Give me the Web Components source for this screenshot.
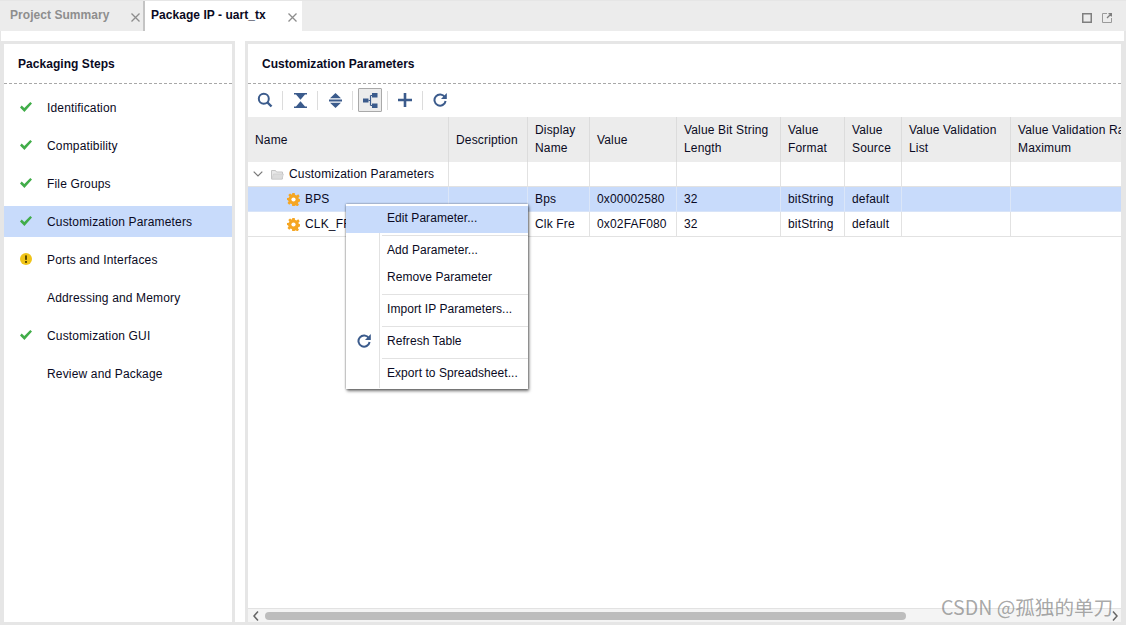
<!DOCTYPE html>
<html lang="en">
<head>
<meta charset="UTF-8">
<title>Package IP - uart_tx</title>
<style>
  html, body { margin: 0; height: 100%; overflow: hidden; background: #e6e6e6; }
  body { font: 12px "Liberation Sans", Arial, sans-serif; color: #0a0a23; letter-spacing: .2px; }
</style>
</head>
<body>
<ip-app></ip-app>

<script>
const ICONS = {
  check: '<svg width="12" height="10" viewBox="0 0 12 10"><path d="M0 5.400 1.700 3.600 4.300 6 10.300 0 12 1.500 4.400 10z" fill="#41ad49"/></svg>',
  warn: '<svg width="12" height="12" viewBox="0 0 12 12"><circle cx="6" cy="6" r="6" fill="#f0c419"/><rect x="5" y="2.200" width="2" height="4.800" rx=".8" fill="#5c4a00"/><rect x="5" y="8" width="2" height="1.900" fill="#5c4a00"/></svg>',
  gear: '<svg width="13" height="13" viewBox="0 0 13 13"><path d="M5.300 0h2.400l.3 1.800 1.300.6L11.300 1.300l1.400 2-1.300 1.400.3 1.100 1.300.4v2.400l-1.500.3-.6 1.300 1.100 1.500-1.700 1.700-1.500-1.100-1.300.6-.3 1.600H5.300L5 11.200l-1.300-.6-1.500 1.100-1.700-1.700L1.600 8.500 1 7.200 0 6.900V5l1.800-.3.600-1.300L1.300 1.900 3 .5l1.500.9L5 1.600z" fill="#f5a623"/><circle cx="6.500" cy="6.500" r="2.100" fill="#fff"/></svg>',
  folder: '<svg width="13" height="11" viewBox="0 0 13 11"><path d="M.5 1.500h4l1 1.500h6v7h-11z" fill="#e8e8e8" stroke="#c4c4c4"/><path d="M2.500 5h10l-1.500 5H.800z" fill="#dcdcdc" stroke="#cacaca" stroke-width=".6"/></svg>',
  chevron: '<svg width="10" height="6" viewBox="0 0 10 6"><path d="M.7.700 5 5 9.300.700" fill="none" stroke="#777" stroke-width="1.200"/></svg>',
  search: '<svg width="16" height="16" viewBox="0 0 16 16"><circle cx="6.800" cy="6.800" r="5" fill="none" stroke="#3b5b8c" stroke-width="2"/><path d="M10.500 10.500 14.500 14.500" stroke="#3b5b8c" stroke-width="2.400"/></svg>',
  collapse: '<svg width="13" height="15" viewBox="0 0 13 15"><path d="M0 0h13v1.500H11L6.500 6.800 2 1.500H0zM0 15h13v-1.500H11L6.500 8.200 2 13.500H0z" fill="#3b5b8c"/></svg>',
  expand: '<svg width="13" height="15" viewBox="0 0 13 15"><path d="M6.500 0 12 5.300H1zM6.500 15 1 9.700h11zM0 6.600h13v1.800H0z" fill="#3b5b8c"/></svg>',
  tree: '<svg width="15" height="15" viewBox="0 0 15 15"><path d="M0 5.500h5.500v4H0zM9 0h5.500v4.500H9zM9 10.500h5.500V15H9z" fill="#3b5b8c"/><path d="M5.500 7.500h2M7.500 2.500v10M7.500 2.500H9M7.500 12.500H9" fill="none" stroke="#3b5b8c" stroke-width="1.200"/></svg>',
  plus: '<svg width="14" height="14" viewBox="0 0 14 14"><path d="M5.700 0h2.600v5.700H14v2.600H8.300V14H5.700V8.300H0V5.700h5.700z" fill="#3b5b8c"/></svg>',
  refresh: '<svg width="14" height="14" viewBox="0 0 14 14"><path d="M11.800 4A5.600 5.600 0 1 0 12.600 8" fill="none" stroke="#3b5b8c" stroke-width="2"/><path d="M13.800 0v6H8z" fill="#3b5b8c"/></svg>'
};

class IpTabbar extends HTMLElement {
  constructor() {
    super();
    this.attachShadow({mode: 'open'}).innerHTML = `
      <style>
        :host { display: flex; height: 30px; margin-top: 1px; background: #ececec; padding-left: 3px; font-weight: bold; letter-spacing: .05px; }
        .tab { display: flex; align-items: center; box-sizing: border-box; height: 30px; padding: 0 0 3px 7px; position: relative; }
        .tab.off { width: 142px; color: #8e8e8e; border-right: 2px solid #c4c4c4; }
        .tab.on { width: 157px; padding-left: 6px; background: #fff; color: #0a0a23; }
        .x { position: absolute; top: 12px; width: 9px; height: 9px; }
        .tab.off .x { left: 128px; }
        .tab.on .x { left: 143px; }
        .right { margin-left: auto; display: flex; gap: 10px; padding: 12px 14px 0 0; }
      </style>
      <div class="tab off">Project Summary<svg class="x" viewBox="0 0 9 9"><path d="M.5.500l8 8M8.500.500l-8 8" stroke="#8d8d8d" stroke-width="1.300"/></svg></div>
      <div class="tab on">Package IP - uart_tx<svg class="x" viewBox="0 0 9 9"><path d="M.5.500l8 8M8.500.500l-8 8" stroke="#8d8d8d" stroke-width="1.300"/></svg></div>
      <div class="right">
        <svg width="10" height="10" viewBox="0 0 10 10"><rect x=".75" y=".75" width="8.500" height="8.500" fill="none" stroke="#7f7f7f" stroke-width="1.500"/></svg>
        <svg width="10" height="10" viewBox="0 0 10 10"><path d="M5 .5H.5v9h9V5" fill="none" stroke="#9a9a9a"/><path d="M5 5 9 1M6.500.5h3v3" fill="none" stroke="#7f7f7f" stroke-width="1.300"/></svg>
      </div>`;
  }
}
customElements.define('ip-tabbar', IpTabbar);

class IpPanel extends HTMLElement {
  constructor() {
    super();
    this.attachShadow({mode: 'open'}).innerHTML = `
      <style>
        :host { display: flex; flex-direction: column; box-sizing: border-box; background: #fff; border: solid #e6e6e6; border-width: 3px 3px 0; min-width: 0; overflow: hidden; }
        .head { flex: none; box-sizing: border-box; height: 40px; display: flex; align-items: center; padding: 0 14px; font-weight: bold; letter-spacing: .05px; border-bottom: 1px dashed #a8a8a8; }
        .body { flex: 1; min-height: 0; display: flex; flex-direction: column; }
      </style>
      <div class="head"><slot name="title"></slot></div>
      <div class="body"><slot></slot></div>`;
  }
}
customElements.define('ip-panel', IpPanel);

class IpStep extends HTMLElement {
  constructor() {
    super();
    const icon = this.getAttribute('icon');
    this.attachShadow({mode: 'open'}).innerHTML = `
      <style>
        :host { display: flex; align-items: center; height: 31px; margin-bottom: 7px; letter-spacing: .16px; }
        :host([selected]) { background: #c8dbfb; }
        .i { flex: none; width: 14px; margin: -2px 0 0 15px; display: flex; justify-content: center; }
        .t { margin-left: 14px; }
      </style>
      <span class="i">${icon ? ICONS[icon] : ''}</span><span class="t"><slot></slot></span>`;
  }
}
customElements.define('ip-step', IpStep);

class IpToolbar extends HTMLElement {
  constructor() {
    super();
    const btn = (n, on) => `<span class="b${on ? ' on' : ''}">${ICONS[n]}</span>`;
    this.attachShadow({mode: 'open'}).innerHTML = `
      <style>
        :host { display: flex; flex: none; align-items: center; height: 33px; padding: 0 0 1px 5px; box-sizing: border-box; }
        .b { display: flex; align-items: center; justify-content: center; box-sizing: border-box; width: 24px; height: 24px; border: 1px solid transparent; border-radius: 1px; }
        .b.on { background: #ececec; border-color: #a9a9a9; }
        .s { width: 1px; height: 19px; background: #dcdcdc; margin: 0 5px; }
      </style>
      ${btn('search')}<i class="s"></i>${btn('collapse')}<i class="s"></i>${btn('expand')}<i class="s"></i>${btn('tree', true)}<i class="s"></i>${btn('plus')}<i class="s"></i>${btn('refresh')}`;
  }
}
customElements.define('ip-toolbar', IpToolbar);

class IpTable extends HTMLElement {
  constructor() {
    super();
    const heads = ['Name', 'Description', 'Display<br>Name', 'Value', 'Value Bit String<br>Length', 'Value<br>Format', 'Value<br>Source', 'Value Validation<br>List', 'Value Validation Range<br>Maximum'];
    const rows = [
      ['Bps', '0x00002580', '32', 'bitString', 'default', 'BPS', true],
      ['Clk Fre', '0x02FAF080', '32', 'bitString', 'default', 'CLK_FRE', false]
    ];
    const row = r => `
      <div class="row${r[6] ? ' sel' : ''}">
        <div class="c name" style="padding-left:39px"><span class="ic">${ICONS.gear}</span>${r[5]}</div>
        <div class="c"></div><div class="c">${r[0]}</div><div class="c">${r[1]}</div><div class="c">${r[2]}</div>
        <div class="c">${r[3]}</div><div class="c">${r[4]}</div><div class="c"></div><div class="c"></div>
      </div>`;
    this.attachShadow({mode: 'open'}).innerHTML = `
      <style>
        :host { display: block; flex: 1; min-height: 0; overflow: hidden; letter-spacing: .16px; }
        .row { display: grid; grid-template-columns: 201px 79px 62px 87px 104px 64px 57px 109px 150px; width: 913px; }
        .c { box-sizing: border-box; border-right: 1px solid #e2e2e2; padding-left: 7px; display: flex; align-items: center; white-space: nowrap; height: 25px; border-bottom: 1px solid #e2e2e2; }
        .head { background: #ececec; }
        .head .c { height: 45px; line-height: 18px; border-bottom: 0; border-right-color: #dcdcdc; display: block; padding-top: 4px; }
        .head .c.one { padding-top: 14px; }
        .group .c { height: 25px; }
        .sel { background: #c8dbfb; }
        .sel .c { border-bottom-color: #d8e4f8; border-right-color: #dbe6f8; }
        .ic { display: flex; margin-right: 5px; }
        .chev { display: flex; margin: 0 8px 0 -2px; }
        .fold { display: flex; margin-right: 5px; }
      </style>
      <div class="row head">${heads.map(h => `<div class="c${h.includes('<br>') ? '' : ' one'}">${h}</div>`).join('')}</div>
      <div class="row group">
        <div class="c name"><span class="chev">${ICONS.chevron}</span><span class="fold">${ICONS.folder}</span>Customization Parameters</div>
        ${'<div class="c"></div>'.repeat(8)}
      </div>
      ${rows.map(row).join('')}`;
  }
}
customElements.define('ip-table', IpTable);

class IpScrollbar extends HTMLElement {
  constructor() {
    super();
    this.attachShadow({mode: 'open'}).innerHTML = `
      <style>
        :host { display: flex; flex: none; align-items: center; height: 13px; background: #f4f4f4; border-top: 1px solid #e2e2e2; }
        svg { flex: none; margin: 0 4px 0 5px; }
        svg.r { margin: 0 3px 0 4px; }
        .track { flex: 1; }
        .thumb { width: 641px; height: 8px; margin-left: 2px; border-radius: 4px; background: #bdbdbd; }
      </style>
      <svg width="6" height="10" viewBox="0 0 6 10"><path d="M5 .5 1 5l4 4.500" fill="none" stroke="#666" stroke-width="1.500"/></svg>
      <div class="track"><div class="thumb"></div></div>
      <svg class="r" width="6" height="10" viewBox="0 0 6 10"><path d="M1 .5 5 5 1 9.500" fill="none" stroke="#666" stroke-width="1.500"/></svg>`;
  }
}
customElements.define('ip-scrollbar', IpScrollbar);

class IpMenu extends HTMLElement {
  constructor() {
    super();
    this.attachShadow({mode: 'open'}).innerHTML = `
      <style>
        :host { display: block; position: absolute; left: 346px; top: 203px; width: 182px; box-sizing: border-box; padding: 2px 0 1px; background: #fff; letter-spacing: .06px; box-shadow: 1px 2px 3px rgba(0,0,0,.55), 0 0 2px rgba(0,0,0,.45); }
        .items { background: linear-gradient(#e2e2e2,#e2e2e2) 33px 0/1px 100% no-repeat; }
        .m { display: flex; align-items: center; box-sizing: border-box; height: 27px; padding: 0 0 3px 41px; position: relative; }
        .m.hi { background: #c8dbfb; }
        .m svg { position: absolute; left: 11px; top: 5px; }
        hr { margin: 2px 0 2px 36px; border: 0; border-top: 1px solid #e2e2e2; }
      </style>
      <div class="items">
        <div class="m hi">Edit Parameter...</div><hr>
        <div class="m">Add Parameter...</div>
        <div class="m">Remove Parameter</div><hr>
        <div class="m">Import IP Parameters...</div><hr>
        <div class="m">${ICONS.refresh}Refresh Table</div><hr>
        <div class="m">Export to Spreadsheet...</div>
      </div>`;
  }
}
customElements.define('ip-menu', IpMenu);

class IpApp extends HTMLElement {
  constructor() {
    super();
    const steps = [
      ['check', 'Identification'], ['check', 'Compatibility'], ['check', 'File Groups'],
      ['check', 'Customization Parameters', true], ['warn', 'Ports and Interfaces'],
      ['', 'Addressing and Memory'], ['check', 'Customization GUI'], ['', 'Review and Package']
    ];
    this.attachShadow({mode: 'open'}).innerHTML = `
      <style>
        :host { display: block; position: relative; width: 1126px; height: 625px; }
        .work { display: flex; gap: 10px; box-sizing: border-box; height: 591px; margin: 0 2px 0 1px; padding: 10px 0 0; background: #fff; }
        .left { width: 234px; flex: none; }
        .right { flex: 1; }
        .steps { padding-top: 8px; }
        .wm { position: absolute; left: 941px; top: 591px; font: 19.6px "Noto Sans CJK SC", sans-serif; letter-spacing: 0; color: rgba(120,120,120,.65); pointer-events: none; white-space: nowrap; }
      </style>
      <ip-tabbar></ip-tabbar>
      <div class="work">
        <ip-panel class="left"><span slot="title">Packaging Steps</span>
          <div class="steps">
            ${steps.map(s => `<ip-step icon="${s[0]}"${s[2] ? ' selected' : ''}>${s[1]}</ip-step>`).join('')}
          </div>
        </ip-panel>
        <ip-panel class="right"><span slot="title">Customization Parameters</span>
          <ip-toolbar></ip-toolbar>
          <ip-table></ip-table>
          <ip-scrollbar></ip-scrollbar>
        </ip-panel>
      </div>
      <ip-menu></ip-menu>
      <div class="wm">CSDN @孤独的单刀</div>`;
  }
}
customElements.define('ip-app', IpApp);
</script>
</body>
</html>
